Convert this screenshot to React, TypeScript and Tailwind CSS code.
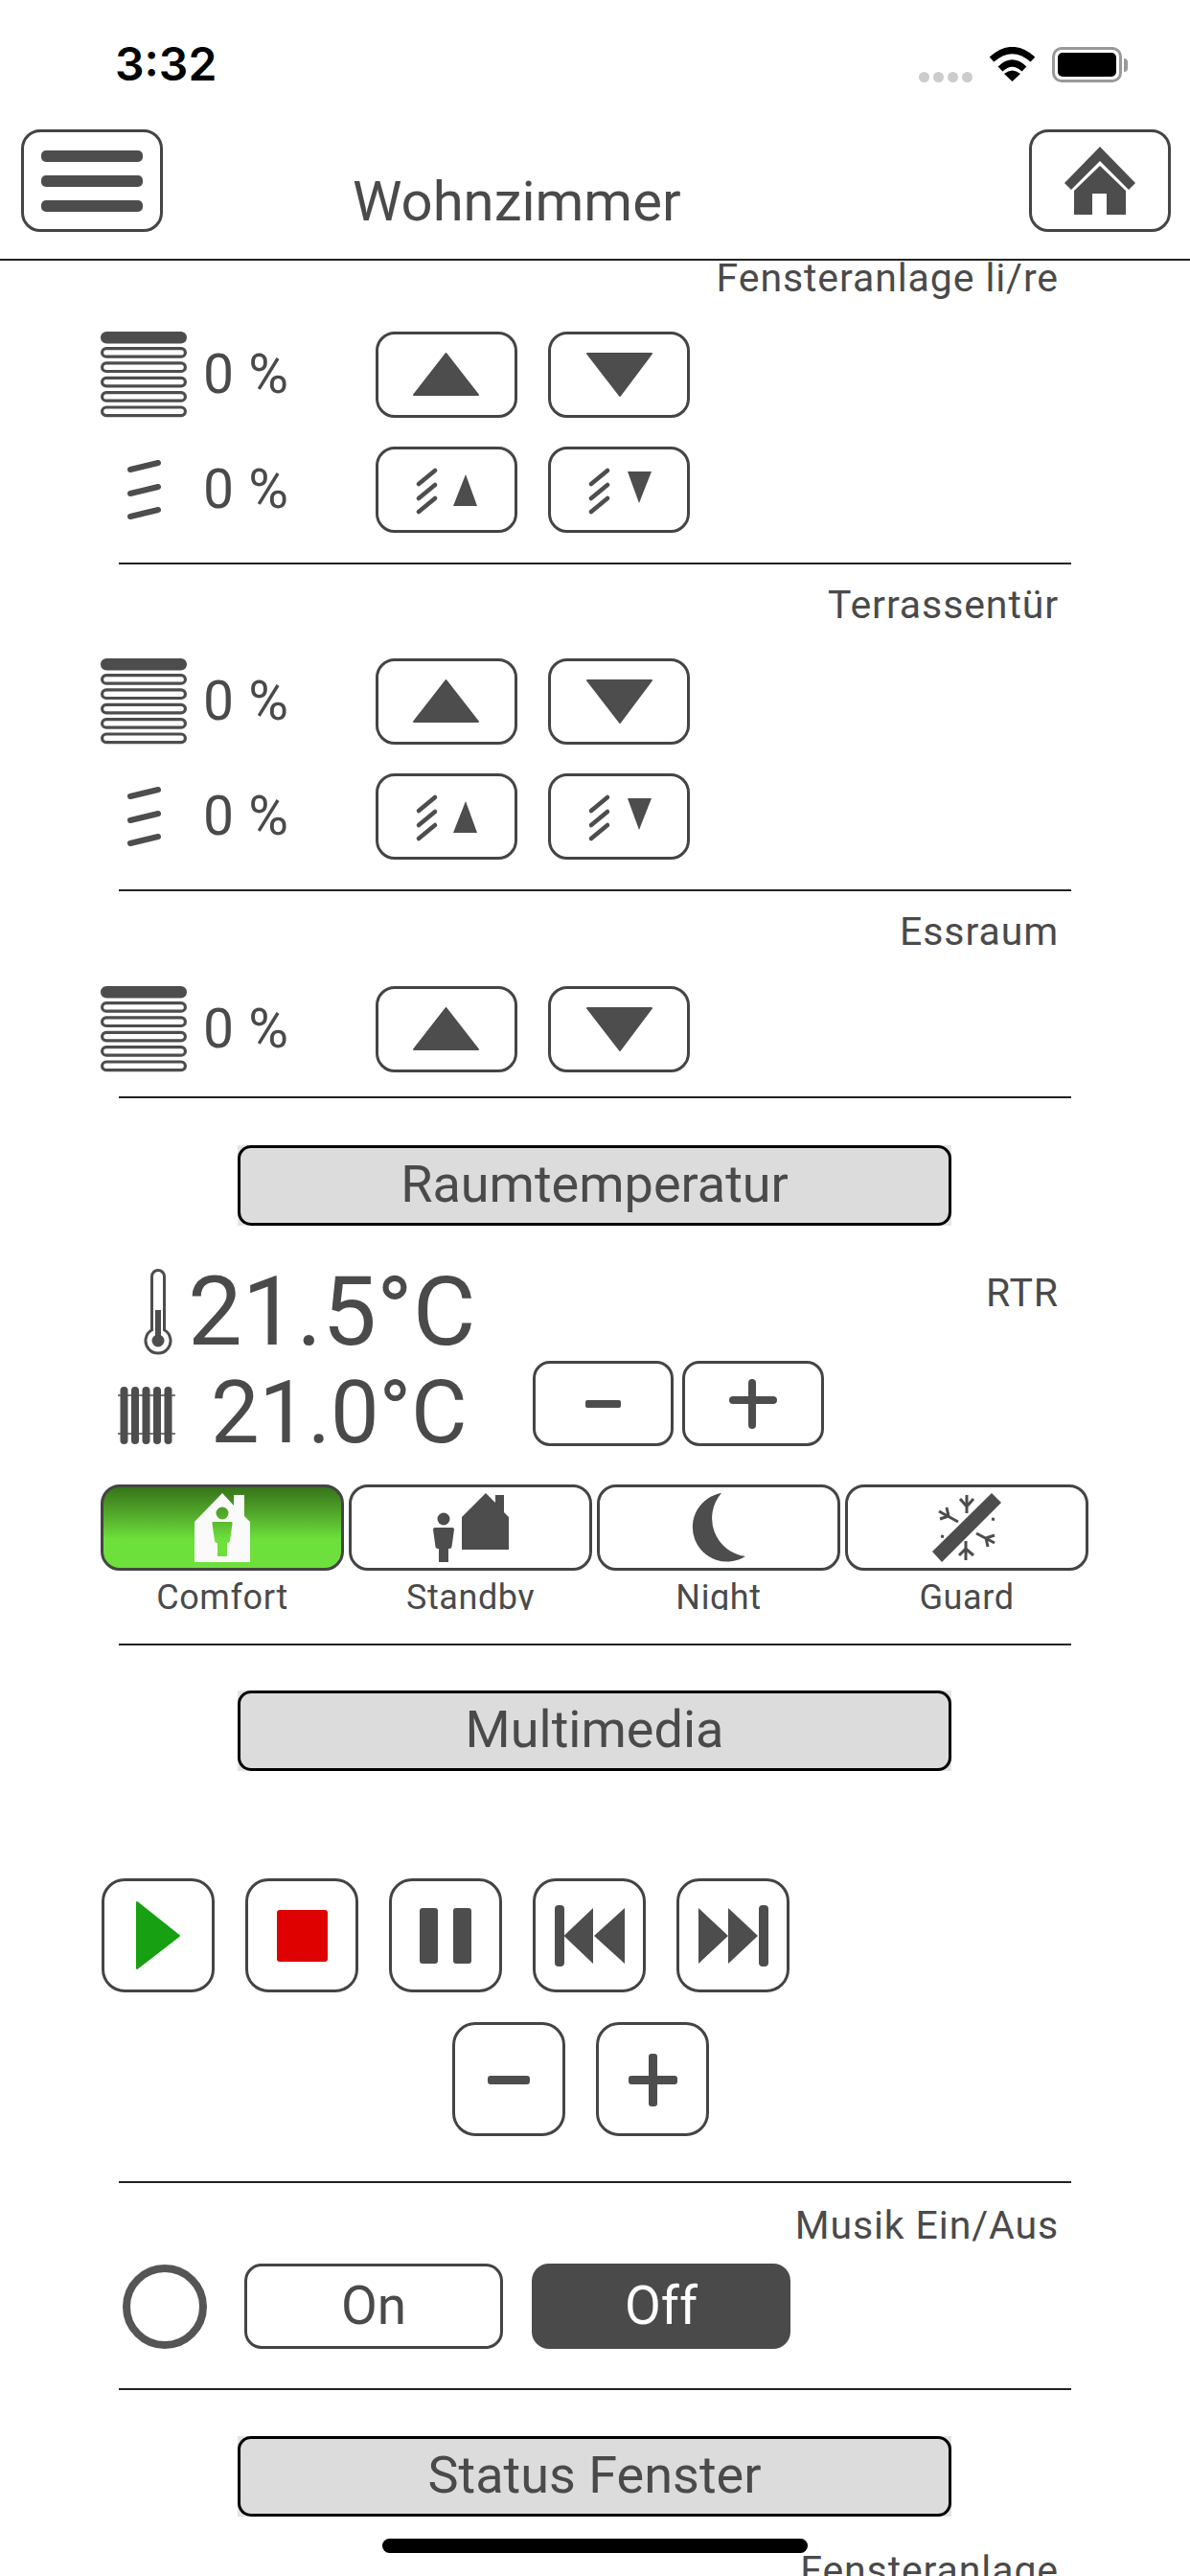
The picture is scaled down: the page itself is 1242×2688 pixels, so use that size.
import type { ReactNode } from 'react';

const ICON = '#4d4d4d';

function Box({ className, children }: { className: string; children?: ReactNode }) {
  return <div className={`shrink-0 border-[3px] border-[#444444] bg-white ${className}`}>{children}</div>;
}

// wide shutter button, coordinates in the svg are button-local
function WideButton({ children }: { children: ReactNode }) {
  return (
    <Box className="w-[148px] h-[90px] rounded-[20px]">
      <svg viewBox="3 3 142 84" className="block w-full h-full">{children}</svg>
    </Box>
  );
}

function MediaButton({ children }: { children: ReactNode }) {
  return (
    <Box className="w-[118px] h-[119px] rounded-[24px]">
      <svg viewBox="3 3 112 113" className="block w-full h-full">{children}</svg>
    </Box>
  );
}

function Separator() {
  return <div className="ml-[124px] w-[994px] h-[2px] bg-[#222222]" />;
}

function GroupLabel({ text }: { text: string }) {
  return <div className="h-[48px] pr-[137px] text-right text-[41px] leading-[48px] tracking-[0.9px] text-[#4a4a4a]">{text}</div>;
}

function SectionHeader({ text }: { text: string }) {
  return (
    <div className="ml-[248px] w-[745px] h-[84px] bg-[#e4e4e4]">
      <div className="flex h-full items-center justify-center rounded-[14px] border-[3px] border-black bg-[#dcdcdc] pb-[3px] text-[54px] text-[#4a4a4a]">
        {text}
      </div>
    </div>
  );
}

function BlindIcon() {
  return (
    <svg viewBox="0 0 90 90" className="block w-[90px] h-[90px]">
      <rect x="0" y="0" width="90" height="12.5" rx="6.2" fill={ICON} />
      {[16, 31.3, 46.7, 62, 77.4].map((y) => (
        <rect key={y} x="1.6" y={y + 1.6} width="86.8" height="8.6" rx="4.3" fill="none" stroke={ICON} strokeWidth="3.2" />
      ))}
    </svg>
  );
}

function SlatIcon() {
  return (
    <svg viewBox="0 0 90 90" className="block w-[90px] h-[90px]">
      <path d="M31 24L60 17M31 49L60 42M31 73L60 66" stroke={ICON} strokeWidth="6" strokeLinecap="round" />
    </svg>
  );
}

function Percent() {
  return <div className="pl-[17px] text-[57px] leading-[90px] tracking-[0.5px] text-[#4a4a4a] whitespace-nowrap">0 %</div>;
}

function SlatLines() {
  return <path d="M45 39L62 25M45 54L62 40M45 68L62 54" stroke={ICON} strokeWidth="4.5" strokeLinecap="round" />;
}

function BlindRow() {
  return (
    <div className="flex h-[90px] pl-[105px]">
      <div className="w-[287px] flex">
        <div className="w-[90px] shrink-0"><BlindIcon /></div>
        <Percent />
      </div>
      <div className="flex gap-[32px]">
        <WideButton>
          <path d="M73.5 23L107 66H40Z" fill={ICON} stroke={ICON} strokeWidth="2" strokeLinejoin="round" />
        </WideButton>
        <WideButton>
          <path d="M41 23H108L75 67Z" fill={ICON} stroke={ICON} strokeWidth="2" strokeLinejoin="round" />
        </WideButton>
      </div>
    </div>
  );
}

function SlatRow() {
  return (
    <div className="mt-[30px] flex h-[90px] pl-[105px]">
      <div className="w-[287px] flex">
        <div className="w-[90px] shrink-0"><SlatIcon /></div>
        <Percent />
      </div>
      <div className="flex gap-[32px]">
        <WideButton>
          <SlatLines />
          <path d="M94 29L106 62H81Z" fill={ICON} />
        </WideButton>
        <WideButton>
          <SlatLines />
          <path d="M83 26H108L95 59Z" fill={ICON} />
        </WideButton>
      </div>
    </div>
  );
}

function Thermometer() {
  return (
    <svg viewBox="0 0 30 90" className="block w-[30px] h-[90px] shrink-0">
      <path d="M8.5 8A6.5 6.5 0 0 1 21.5 8V63.8A13 13 0 1 1 8.5 63.8Z" fill="none" stroke={ICON} strokeWidth="3" />
      <rect x="12" y="43" width="6" height="29" fill={ICON} />
      <circle cx="15" cy="75" r="6.5" fill={ICON} />
    </svg>
  );
}

function Radiator() {
  return (
    <svg viewBox="0 0 60 60" className="block w-[60px] h-[60px] shrink-0">
      <path d="M0 9H60M0 49H60" stroke="#777777" strokeWidth="2" />
      {[6.5, 18, 29.5, 41, 52.5].map((x) => (
        <rect key={x} x={x - 4} y="0" width="8" height="60" rx="4" fill={ICON} />
      ))}
    </svg>
  );
}

function ModeColumn({ label, active, children }: { label: string; active?: boolean; children: ReactNode }) {
  return (
    <div className="w-[254px]">
      <div
        className={
          active
            ? 'flex h-[90px] items-center justify-center rounded-[20px] border-[3px] border-[#444444] bg-linear-to-b from-[#37741a] via-[#6ee03b] via-65% to-[#6ee03b]'
            : 'flex h-[90px] items-center justify-center rounded-[20px] border-[3px] border-[#444444] bg-white'
        }
      >
        {children}
      </div>
      <div className="h-[41px] overflow-hidden text-center text-[36px] leading-[56px] tracking-[0.6px] text-[#4a4a4a]">{label}</div>
    </div>
  );
}

export default function App() {
  return (
    <div className="relative w-[1242px] h-[2688px] overflow-hidden bg-white font-[Roboto,sans-serif]">
      {/* status bar */}
      <div className="flex h-[135px] justify-between pl-[120px] pr-[65px]">
        <div className="pt-[43px] text-[48px] font-semibold leading-[48px] text-black font-[Inter,sans-serif]">3:32</div>
        <div className="flex items-start gap-[17px] pt-[49px]">
          <div className="mt-[26px] flex gap-[4px]">
            {[0, 1, 2, 3].map((d) => (
              <div key={d} className="w-[11px] h-[11px] rounded-full bg-[#cccccc]" />
            ))}
          </div>
          <svg viewBox="0 0 49 36" className="block w-[49px] h-[36px]">
            <path d="M3 13Q24.5 -6 46 13" fill="none" stroke="#000" strokeWidth="7" />
            <path d="M12 23Q24.5 11 37 23" fill="none" stroke="#000" strokeWidth="7" />
            <path d="M24.5 36L33 28Q24.5 21 16 28Z" fill="#000" />
          </svg>
          <div className="flex items-center">
            <div className="w-[73px] h-[37px] rounded-[10px] border-[3px] border-[#999999] p-[3px]">
              <div className="w-full h-full rounded-[5px] bg-black" />
            </div>
            <div className="ml-[2px] w-[4px] h-[14px] rounded-r-full bg-[#999999]" />
          </div>
        </div>
      </div>

      {/* top bar */}
      <div className="flex h-[137px] items-start border-b-2 border-[#222222] pl-[22px] pr-[20px]">
        <Box className="flex w-[148px] h-[107px] flex-col items-center justify-center gap-[14px] rounded-[20px]">
          <div className="w-[106px] h-[12px] rounded-[5px] bg-[#4d4d4d]" />
          <div className="w-[106px] h-[12px] rounded-[5px] bg-[#4d4d4d]" />
          <div className="w-[106px] h-[12px] rounded-[5px] bg-[#4d4d4d]" />
        </Box>
        <div className="ml-[198px] mt-[40px] text-[58px] leading-[70px] text-[#4a4a4a]">Wohnzimmer</div>
        <Box className="ml-auto flex w-[148px] h-[107px] items-center justify-center rounded-[20px]">
          <svg viewBox="0 0 74 72" className="block w-[74px] h-[72px]">
            <path d="M37 0L74 38L67 45L37 15L7 45L0 38Z" fill={ICON} />
            <path d="M37 20L64 46V71H44V49H29V71H10V46Z" fill={ICON} />
          </svg>
        </Box>
      </div>

      {/* scrolling content */}
      <div className="h-[2416px] overflow-hidden">
        <div className="-mt-[6px]">
          <GroupLabel text="Fensteranlage li/re" />
        </div>
        <div className="mt-[32px]">
          <BlindRow />
          <SlatRow />
        </div>
        <div className="mt-[31px]"><Separator /></div>

        <div className="mt-[18px]"><GroupLabel text="Terrassentür" /></div>
        <div className="mt-[32px]">
          <BlindRow />
          <SlatRow />
        </div>
        <div className="mt-[31px]"><Separator /></div>

        <div className="mt-[18px]"><GroupLabel text="Essraum" /></div>
        <div className="mt-[33px]"><BlindRow /></div>
        <div className="mt-[25px]"><Separator /></div>

        <div className="mt-[49px]"><SectionHeader text="Raumtemperatur" /></div>

        {/* temperature */}
        <div className="mt-[45px] flex h-[90px] pl-[150px]">
          <Thermometer />
          <div className="ml-[16px] text-[101px] leading-[90px] text-[#4a4a4a] whitespace-nowrap">21.5°C</div>
          <div className="ml-auto mt-[1px] pr-[137px] text-[41px] leading-[48px] tracking-[0.9px] text-[#4a4a4a]">RTR</div>
        </div>
        <div className="mt-[6px] flex h-[89px] pl-[123px]">
          <div className="mt-[27px]"><Radiator /></div>
          <div className="ml-[37px] mt-[10px] w-[336px] text-[90px] leading-[89px] text-[#4a4a4a] whitespace-nowrap">21.0°C</div>
          <div className="flex gap-[9px]">
            <Box className="flex w-[147px] h-[89px] items-center justify-center rounded-[18px]">
              <div className="w-[37px] h-[8px] rounded-[2px] bg-[#4d4d4d]" />
            </Box>
            <Box className="w-[148px] h-[89px] rounded-[18px]">
              <svg viewBox="3 3 142 83" className="block w-full h-full">
                <path d="M53 41H95M73 23V67" stroke={ICON} strokeWidth="8" strokeLinecap="round" />
              </svg>
            </Box>
          </div>
        </div>

        {/* modes */}
        <div className="mt-[40px] flex gap-[5px] pl-[105px]">
          <ModeColumn label="Comfort" active>
            <svg viewBox="0 0 58 72" className="block w-[58px] h-[72px]">
              <path
                fillRule="evenodd"
                fill="#fafafa"
                d="M29 0L41 13V2H52V24L58 30V72H0V30ZM29 14.5A6.5 6.5 0 1 0 29 27.5A6.5 6.5 0 1 0 29 14.5ZM20 30Q18 30 18.5 32L21 50Q21.2 52 24 52V66H34V52Q36.8 52 37 50L39.5 32Q40 30 38 30Z"
              />
            </svg>
          </ModeColumn>
          <ModeColumn label="Standby">
            <svg viewBox="0 0 79 72" className="block w-[79px] h-[72px]">
              <path d="M55 0L65 10V2H74V20L79 25V59H30V25Z" fill={ICON} />
              <circle cx="11" cy="27" r="6.5" fill={ICON} />
              <path d="M2 36H20Q22 36 22 38L19.5 56Q19.2 58 16 58V72H6V58Q2.8 58 2.5 56L0 38Q0 36 2 36Z" fill={ICON} />
            </svg>
          </ModeColumn>
          <ModeColumn label="Night">
            <svg viewBox="0 0 58 72" className="block w-[58px] h-[72px]">
              <path d="M32 0A36 36 0 1 0 57 66A40 40 0 0 1 32 0Z" fill={ICON} />
            </svg>
          </ModeColumn>
          <ModeColumn label="Guard">
            <svg viewBox="0 0 72 72" className="block w-[72px] h-[72px]">
              <path d="M62 0L72 10L10 72L0 61Z" fill={ICON} />
              <path
                d="M36 2V21M29 6L36 14L43 6M27 30L7 19M15 15L17 24M8 27L17 24M35 50V70M28 65L35 58L43 65M46 42L65 52M58 56L56 47M65 44L56 47M62 27L65 27.5M9 45L12 45.5"
                fill="none"
                stroke={ICON}
                strokeWidth="3"
              />
            </svg>
          </ModeColumn>
        </div>
        <div className="mt-[35px]"><Separator /></div>

        <div className="mt-[47px]"><SectionHeader text="Multimedia" /></div>

        {/* media controls */}
        <div className="mt-[112px] flex gap-[32px] pl-[106px]">
          <MediaButton>
            <path d="M37 25L81 60L37 94Z" fill="#16a012" stroke="#16a012" strokeWidth="2" strokeLinejoin="round" />
          </MediaButton>
          <MediaButton>
            <rect x="33" y="33" width="53" height="54" rx="3" fill="#df0000" />
          </MediaButton>
          <MediaButton>
            <rect x="32" y="31" width="19" height="58" rx="3" fill={ICON} />
            <rect x="67" y="31" width="19" height="58" rx="3" fill={ICON} />
          </MediaButton>
          <MediaButton>
            <rect x="23" y="28" width="10" height="64" rx="4" fill={ICON} />
            <path d="M32.5 60L63 31V89ZM64 60L96 31V89Z" fill={ICON} />
          </MediaButton>
          <MediaButton>
            <path d="M23 31L54 60L23 89ZM54 31L85 60L54 89Z" fill={ICON} />
            <rect x="86" y="28" width="10" height="64" rx="4" fill={ICON} />
          </MediaButton>
        </div>
        <div className="mt-[31px] flex gap-[32px] pl-[472px]">
          <MediaButton>
            <rect x="37" y="56" width="44" height="9" rx="3" fill={ICON} />
          </MediaButton>
          <MediaButton>
            <rect x="34" y="56" width="51" height="9" rx="3" fill={ICON} />
            <rect x="55" y="33" width="9" height="55" rx="3" fill={ICON} />
          </MediaButton>
        </div>
        <div className="mt-[47px]"><Separator /></div>

        <div className="mt-[20px]"><GroupLabel text="Musik Ein/Aus" /></div>
        <div className="mt-[16px] flex h-[89px] items-center pl-[128px]">
          <div className="w-[88px] h-[88px] rounded-full border-[8px] border-[#555555]" />
          <Box className="ml-[39px] flex w-[270px] h-[89px] items-center justify-center rounded-[18px] text-[55px] text-[#4a4a4a]">On</Box>
          <div className="ml-[30px] flex w-[270px] h-[89px] items-center justify-center rounded-[18px] bg-[#4a4a4a] text-[55px] text-white">Off</div>
        </div>
        <div className="mt-[41px]"><Separator /></div>

        <div className="mt-[48px]"><SectionHeader text="Status Fenster" /></div>
        <div className="mt-[32px]"><GroupLabel text="Fensteranlage" /></div>
      </div>

      {/* home indicator */}
      <div className="absolute left-[399px] top-[2649px] w-[444px] h-[15px] rounded-full bg-black" />
    </div>
  );
}
